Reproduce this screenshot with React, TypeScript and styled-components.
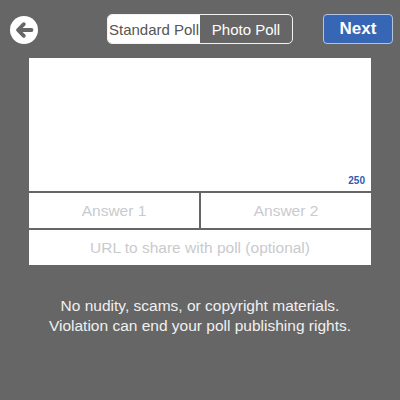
import React, { useState } from 'react';
import styled, { createGlobalStyle } from 'styled-components';

const GlobalStyle = createGlobalStyle`
  html, body {
    margin: 0;
    padding: 0;
    background: #666666;
    font-family: "Liberation Sans", Arial, sans-serif;
  }
  * { box-sizing: border-box; }
`;

const Screen = styled.div`
  width: 400px;
  height: 400px;
  background: #666666;
  padding-top: 14px;
`;

const Header = styled.div`
  display: grid;
  grid-template-columns: 1fr auto 1fr;
  align-items: center;
  height: 30px;
  padding: 0 7px;
`;

const BackButton = styled.button`
  justify-self: start;
  width: 28px;
  height: 28px;
  margin: 1px 0 0 3px;
  padding: 0;
  border: none;
  background: none;
  display: flex;
  cursor: pointer;
`;

const Segmented = styled.div`
  display: flex;
  height: 30px;
  border: 1px solid #f2f2f2;
  border-radius: 5px;
  overflow: hidden;
`;

const Segment = styled.button<{ $active?: boolean }>`
  width: 92px;
  height: 100%;
  border: none;
  padding: 0;
  font-family: inherit;
  font-size: 15px;
  background: ${({ $active }) => ($active ? '#ffffff' : 'transparent')};
  color: ${({ $active }) => ($active ? '#555555' : '#ffffff')};
  cursor: pointer;
`;

const NextButton = styled.button`
  justify-self: end;
  width: 70px;
  height: 30px;
  border: 1px solid #b4c3de;
  border-radius: 4px;
  background: #3766b4;
  color: #ffffff;
  font-family: inherit;
  font-weight: bold;
  font-size: 17px;
  padding: 0;
  cursor: pointer;
`;

const Form = styled.div`
  margin: 14px 29px 0;
  display: flex;
  flex-direction: column;
  gap: 2px;
`;

const QuestionBox = styled.div`
  position: relative;
  height: 133px;
  background: #ffffff;
`;

const QuestionArea = styled.textarea`
  width: 100%;
  height: 100%;
  border: none;
  resize: none;
  outline: none;
  padding: 8px;
  font-family: inherit;
  font-size: 16px;
  background: transparent;
`;

const Counter = styled.span`
  position: absolute;
  right: 6px;
  bottom: 5px;
  font-size: 10px;
  font-weight: bold;
  color: #2f5cb0;
`;

const Row = styled.div`
  display: flex;
  gap: 2px;
`;

const Field = styled.input`
  flex: 1;
  min-width: 0;
  height: 35px;
  border: none;
  outline: none;
  background: #ffffff;
  text-align: center;
  font-family: inherit;
  font-size: 15.5px;
  color: #333;
  padding: 0 6px;

  &::placeholder {
    color: #cacace;
    opacity: 1;
  }
`;

const Notice = styled.p`
  margin: 31px 0 0;
  text-align: center;
  color: #f0f0f0;
  font-size: 15.5px;
  line-height: 20px;
`;

const BackIcon = () => (
  <svg width="28" height="28" viewBox="0 0 28 28">
    <circle cx="14" cy="14" r="14" fill="#ffffff" />
    <path
      d="M21.5 14H8.5M13.8 8.2L8 14l5.8 5.8"
      stroke="#666666"
      strokeWidth="3.8"
      strokeLinecap="round"
      strokeLinejoin="round"
      fill="none"
    />
  </svg>
);

const App: React.FC = () => {
  const [mode, setMode] = useState<'standard' | 'photo'>('standard');
  const [question, setQuestion] = useState('');

  return (
    <>
      <GlobalStyle />
      <Screen>
        <Header>
          <BackButton aria-label="Back">
            <BackIcon />
          </BackButton>
          <Segmented>
            <Segment $active={mode === 'standard'} onClick={() => setMode('standard')}>
              Standard Poll
            </Segment>
            <Segment $active={mode === 'photo'} onClick={() => setMode('photo')}>
              Photo Poll
            </Segment>
          </Segmented>
          <NextButton>Next</NextButton>
        </Header>

        <Form>
          <QuestionBox>
            <QuestionArea
              value={question}
              maxLength={250}
              onChange={(e) => setQuestion(e.target.value)}
            />
            <Counter>{250 - question.length}</Counter>
          </QuestionBox>
          <Row>
            <Field placeholder="Answer 1" />
            <Field placeholder="Answer 2" />
          </Row>
          <Row>
            <Field placeholder="URL to share with poll (optional)" />
          </Row>
        </Form>

        <Notice>
          No nudity, scams, or copyright materials.
          <br />
          Violation can end your poll publishing rights.
        </Notice>
      </Screen>
    </>
  );
};

export default App;
